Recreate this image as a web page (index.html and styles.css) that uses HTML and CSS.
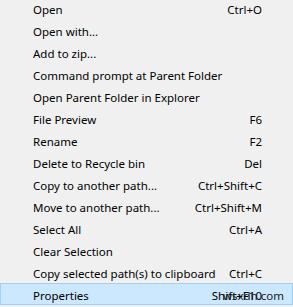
FILE: index.html
```html
<!DOCTYPE html>
<html>
<head>
<meta charset="utf-8">
<link rel="stylesheet" href="styles.css">
</head>
<body>
<ul class="menu">
  <li class="item"><span class="label">Open</span><span class="key">Ctrl+O</span></li>
  <li class="item"><span class="label">Open with...</span></li>
  <li class="item"><span class="label">Add to zip...</span></li>
  <li class="item"><span class="label">Command prompt at Parent Folder</span></li>
  <li class="item"><span class="label">Open Parent Folder in Explorer</span></li>
  <li class="item"><span class="label">File Preview</span><span class="key">F6</span></li>
  <li class="item"><span class="label">Rename</span><span class="key">F2</span></li>
  <li class="item"><span class="label">Delete to Recycle bin</span><span class="key">Del</span></li>
  <li class="item"><span class="label">Copy to another path...</span><span class="key">Ctrl+Shift+C</span></li>
  <li class="item"><span class="label">Move to another path...</span><span class="key">Ctrl+Shift+M</span></li>
  <li class="item"><span class="label">Select All</span><span class="key">Ctrl+A</span></li>
  <li class="item"><span class="label">Clear Selection</span></li>
  <li class="item"><span class="label">Copy selected path(s) to clipboard</span><span class="key">Ctrl+C</span></li>
  <li class="item active"><span class="label">Properties</span><span class="key">Shift+F10</span><span class="mark">wsxdn.com</span></li>
</ul>
</body>
</html>
```
FILE: styles.css
```css
html, body {
  margin: 0;
  padding: 0;
  background: #f0f0f0;
}
body {
  width: 293px;
  height: 307px;
  overflow: hidden;
  font-family: "Noto Sans", "Open Sans", sans-serif;
  font-size: 11.5px;
  color: #000;
}
.menu {
  list-style: none;
  margin: -3px 0 0 0;
  padding: 0;
}
.item {
  position: relative;
  display: flex;
  align-items: flex-start;
  justify-content: space-between;
  height: 22px;
  padding: 5px 31px 0 33px;
  box-sizing: border-box;
  line-height: 16px;
  white-space: nowrap;
}
.item.active {
  background: #cce8ff;
  border: 1px solid #99d1ff;
  padding: 4px 30px 0 32px;
}
.mark {
  position: absolute;
  left: 222px;
  top: 4px;
  color: #1a1a1a;
}
```
